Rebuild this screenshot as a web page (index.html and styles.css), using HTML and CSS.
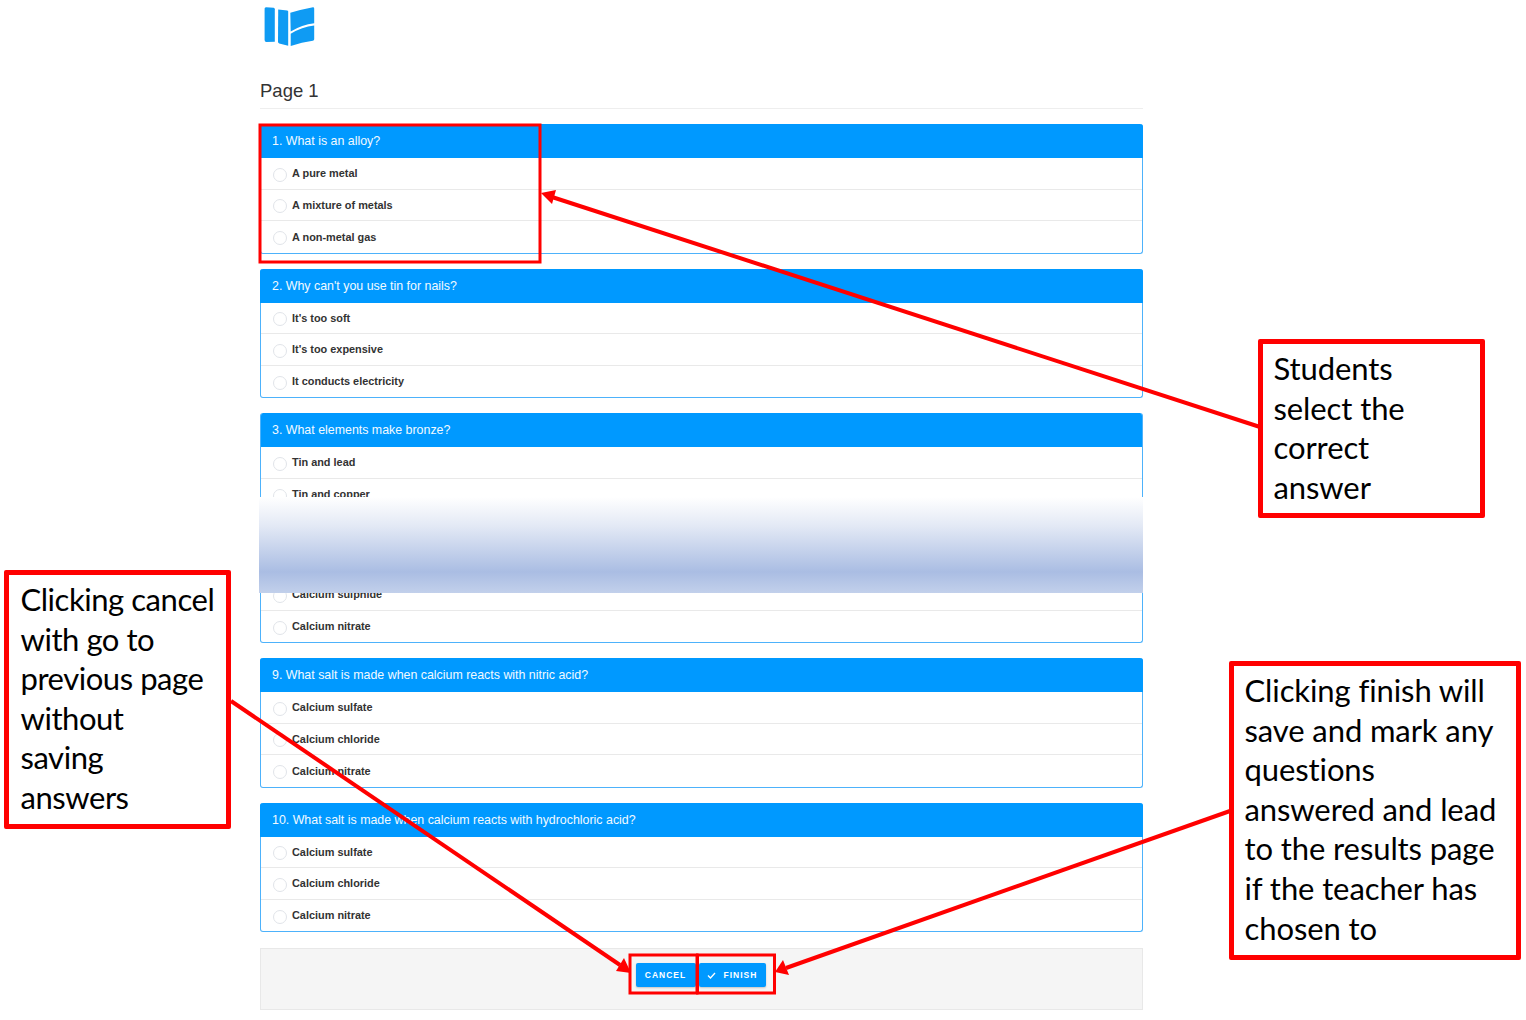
FILE: index.html
```html
<!DOCTYPE html>
<html lang="en">
<head>
<meta charset="utf-8">
<title>Page 1</title>
<link rel="stylesheet" href="styles.css">
</head>
<body>
<div class="canvas">
  <main class="quiz">
    <svg class="logo" viewBox="0 0 52 42" width="52" height="42" aria-hidden="true">
      <path d="M2 1.2 L9.600 1.800 Q10.800 2 10.800 3.200 L10.800 35.800 L2.400 36 Q.6 36 .6 34 L.6 2.800 Q.6 1.200 2 1.200Z"/>
      <path d="M14.200 3.400 L23.400 4.600 L24.200 5.200 L24.200 39.800 L15.200 37.400 Q14 37 14 36 Z"/>
      <path d="M26.300 6.800 Q38 3.200 49 1.200 Q50.200 1.200 50.200 2.600 L50.200 17.200 Q38 18.600 26.700 25.400 Z"/>
      <path d="M26.700 27.800 Q38 21 50.200 19.600 L50.200 33.200 Q50.200 34.600 48.800 34.800 Q38 36 26.700 40 Z"/>
    </svg>
    <h1 class="page-title">Page 1</h1>

    <section class="card">
      <h2 class="card-head">1. What is an alloy?</h2>
      <div class="opt"><span class="radio"></span><span class="opt-text">A pure metal</span></div>
      <div class="opt"><span class="radio"></span><span class="opt-text">A mixture of metals</span></div>
      <div class="opt"><span class="radio"></span><span class="opt-text">A non-metal gas</span></div>
    </section>

    <section class="card">
      <h2 class="card-head">2. Why can't you use tin for nails?</h2>
      <div class="opt"><span class="radio"></span><span class="opt-text">It's too soft</span></div>
      <div class="opt"><span class="radio"></span><span class="opt-text">It's too expensive</span></div>
      <div class="opt"><span class="radio"></span><span class="opt-text">It conducts electricity</span></div>
    </section>

    <div class="torn">
      <section class="card card-top">
        <h2 class="card-head">3. What elements make bronze?</h2>
        <div class="opt"><span class="radio"></span><span class="opt-text">Tin and lead</span></div>
        <div class="opt"><span class="radio"></span><span class="opt-text">Tin and copper</span></div>
      </section>
      <div class="fade"></div>
      <section class="card card-bottom">
        <div class="opt opt-cut"><span class="radio"></span><span class="opt-text">Calcium sulphide</span></div>
        <div class="opt"><span class="radio"></span><span class="opt-text">Calcium nitrate</span></div>
      </section>
    </div>

    <section class="card">
      <h2 class="card-head">9. What salt is made when calcium reacts with nitric acid?</h2>
      <div class="opt"><span class="radio"></span><span class="opt-text">Calcium sulfate</span></div>
      <div class="opt"><span class="radio"></span><span class="opt-text">Calcium chloride</span></div>
      <div class="opt"><span class="radio"></span><span class="opt-text">Calcium nitrate</span></div>
    </section>

    <section class="card">
      <h2 class="card-head">10. What salt is made when calcium reacts with hydrochloric acid?</h2>
      <div class="opt"><span class="radio"></span><span class="opt-text">Calcium sulfate</span></div>
      <div class="opt"><span class="radio"></span><span class="opt-text">Calcium chloride</span></div>
      <div class="opt"><span class="radio"></span><span class="opt-text">Calcium nitrate</span></div>
    </section>

    <footer class="actions">
      <button class="btn" type="button">Cancel</button>
      <button class="btn btn-finish" type="button">
        <svg class="check" viewBox="0 0 10 8" width="9" height="7" aria-hidden="true"><path d="M1 4 L3.8 6.8 L9 1.2"/></svg>
        Finish
      </button>
    </footer>
  </main>

  <svg class="arrows" viewBox="0 0 1526 1020" width="1526" height="1020" aria-hidden="true">
    <rect class="hl" x="260" y="125" width="280" height="137"/>
    <rect class="hl" x="630" y="955" width="67" height="38"/>
    <rect class="hl" x="697.500" y="955" width="77" height="38"/>
    <line class="arrow-line" x1="1260" y1="427" x2="552" y2="197"/>
    <polygon class="arrow-head" points="541,193 556,190 552,204"/>
    <line class="arrow-line" x1="231" y1="701" x2="620" y2="965"/>
    <polygon class="arrow-head" points="631,973 616,971 624,958"/>
    <line class="arrow-line" x1="1230" y1="811" x2="786" y2="968"/>
    <polygon class="arrow-head" points="775,972 783,960 789,975"/>
  </svg>

  <aside class="note note-students">Students select the correct answer</aside>
  <aside class="note note-cancel">Clicking cancel with go to previous page without<br>saving<br>answers</aside>
  <aside class="note note-finish">Clicking finish will save and mark any questions answered and lead to the results page if the teacher has chosen to</aside>
</div>
</body>
</html>
```
FILE: styles.css
```css
* { box-sizing: border-box; }
html, body { margin: 0; padding: 0; background: #fff; }
.canvas {
  position: relative;
  width: 1526px;
  height: 1020px;
  overflow: hidden;
  font-family: "Liberation Sans", Arial, sans-serif;
}
.quiz {
  display: flex;
  flex-direction: column;
  gap: 15px;
  width: 883px;
  margin-left: 260px;
  padding-top: 5.500px;
}
.logo { display: block; margin-left: 4px; fill: #0f9bf3; flex: none; }
.page-title {
  margin: -5px 0 0;
  padding: 16px 0 0;
  height: 51.500px;
  font-size: 18.500px;
  font-weight: 400;
  line-height: 33px;
  color: #333;
  border-bottom: 1px solid #eee;
}
.card {
  border: 1px solid #4db2fb;
  border-top: 0;
  border-radius: 3px;
  background: #fff;
  height: 129.500px;
  flex: none;
}
.card-head {
  margin: 0 -1px;
  height: 34px;
  padding: 0 12px;
  font-size: 12.400px;
  font-weight: 400;
  line-height: 34px;
  color: #f2f9ff;
  background: #0099ff;
  border-radius: 3px 3px 0 0;
}
.opt {
  display: flex;
  align-items: center;
  gap: 5px;
  height: 31.500px;
  padding-left: 12px;
  border-bottom: 1px solid #e9e9e9;
}
.opt:last-child { border-bottom: 0; }
.radio {
  width: 14px;
  height: 14px;
  margin-top: 3px;
  border: 1px solid #e1e4e9;
  border-radius: 50%;
  background: #fff;
  flex: none;
}
.opt-text {
  font-size: 10.900px;
  font-weight: 700;
  line-height: 14px;
  color: #333;
}
.torn { display: flex; flex-direction: column; flex: none; }
.card-top {
  height: 84px;
  overflow: hidden;
  border-bottom: 0;
  border-radius: 3px 3px 0 0;
}
.fade {
  flex: none;
  height: 96px;
  margin-left: -1px;
  background: linear-gradient(180deg, #fff 0%, #e3e9f5 30%, #aabde3 78%, #c2d0eb 100%);
}
.card-bottom {
  height: 50px;
  overflow: hidden;
  border-radius: 0 0 3px 3px;
}
.opt-cut { margin-top: -14px; }
.actions {
  display: flex;
  justify-content: center;
  gap: 3px;
  height: 62px;
  margin-top: 1px;
  padding: 14px 2px 0 0;
  background: #f5f5f5;
  border: 1px solid #e8e8e8;
  flex: none;
}
.btn {
  display: flex;
  align-items: center;
  justify-content: center;
  gap: 8px;
  width: 60px;
  height: 24px;
  padding: 0;
  border: 0;
  border-radius: 2px;
  background: #0099ff;
  color: #fff;
  font-family: "Liberation Sans", Arial, sans-serif;
  font-size: 8.500px;
  font-weight: 700;
  letter-spacing: 1px;
  text-transform: uppercase;
  box-shadow: 0 1px 2px rgba(0, 0, 0, .2);
}
.btn-finish { width: 67px; }
.check { fill: none; stroke: #fff; stroke-width: 1.500; }
.arrows { position: absolute; left: 0; top: 0; pointer-events: none; }
.hl { fill: none; stroke: #f00; stroke-width: 3; }
.arrow-line { stroke: #f00; stroke-width: 4; }
.arrow-head { fill: #f00; }
.note {
  position: absolute;
  background: #fff;
  border: 5px solid #f00;
  border-radius: 2px;
  padding: 5px 10px 0 10.500px;
  font-family: Lato, "Open Sans", sans-serif;
  font-size: 31px;
  font-variant-ligatures: none;
  letter-spacing: -.1px;
  line-height: 39.600px;
  color: #000;
}
.note-students { left: 1258px; top: 339px; width: 227px; height: 179px; }
.note-cancel { left: 4px; top: 570px; width: 227px; height: 259px; padding: 5px 0 0 11.500px; letter-spacing: -.45px; }
.note-finish { left: 1229px; top: 661px; width: 292px; height: 299px; }
```
